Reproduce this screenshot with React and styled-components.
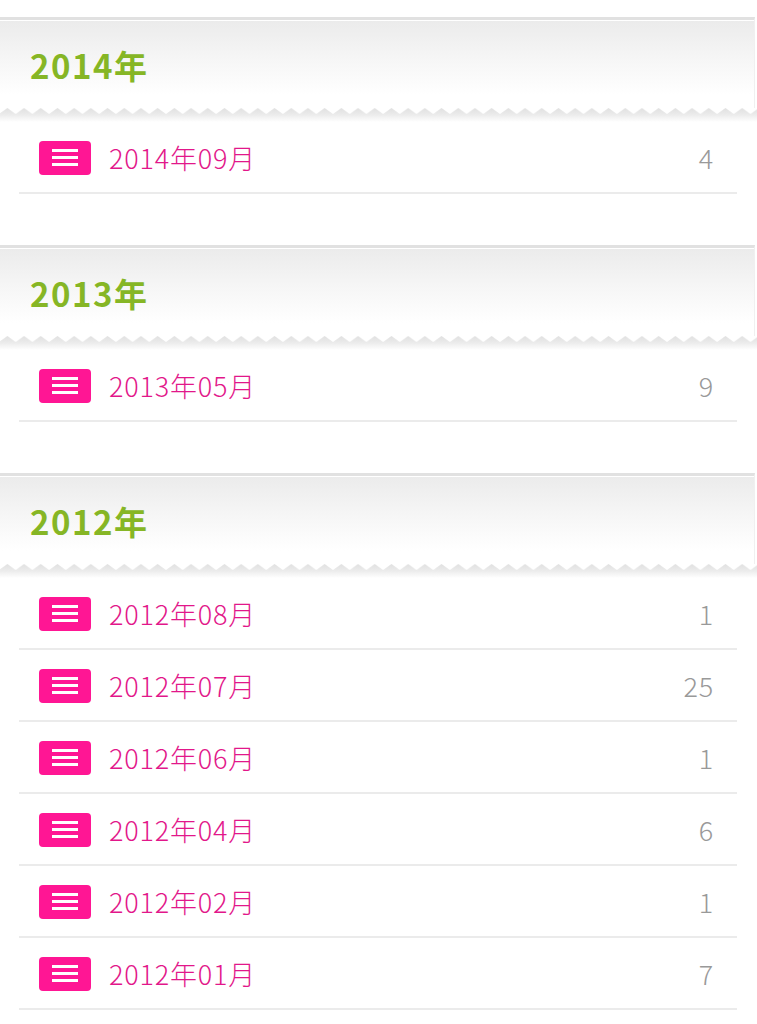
import React, { useId } from 'react'
import styled, { createGlobalStyle } from 'styled-components'

const GlobalStyle = createGlobalStyle`
  html, body {
    margin: 0;
    padding: 0;
    background: #fff;
  }
  body {
    font-family: 'Noto Sans CJK JP', 'Noto Sans', sans-serif;
  }
`

const Page = styled.div`
  padding-top: 17px;
`
const Section = styled.section`
  margin-bottom: 51px;
`
const Header = styled.div`
  width: 755px;
  height: 91px;
  box-sizing: border-box;
  border-top: 3px solid #e1e1e1;
  border-right: 1px solid #f0f0f0;
  box-shadow: inset 0 1px 0 #fff;
  background: linear-gradient(#ebebeb 0%, #f6f6f6 45%, #fff 85%);
  display: flex;
  align-items: center;
  padding: 2px 0 0 30px;
`
const Year = styled.h2`
  margin: 0;
  color: #86b625;
  font-size: 33px;
  font-weight: 700;
  letter-spacing: 1.5px;
`
const ZigzagStrip = styled.svg`
  display: block;
  width: 100%;
  height: 14px;
`
const List = styled.ul`
  list-style: none;
  margin: 0 20px 0 19px;
  padding: 0;
`
const Row = styled.li`
  height: 72px;
  box-sizing: border-box;
  border-bottom: 2px solid #ebebeb;
  display: flex;
  align-items: center;
  padding: 1px 23px 0 20px;
`
const Icon = styled.span`
  width: 52px;
  height: 34px;
  border-radius: 4px;
  background: #ff1694;
  display: flex;
  flex-direction: column;
  justify-content: center;
  align-items: center;
  gap: 4px;
  margin-right: 18px;
  flex-shrink: 0;
`
const Bar = styled.span`
  width: 26px;
  height: 3px;
  background: #fff;
`
const Month = styled.span`
  color: #e2178a;
  font-size: 27px;
  font-weight: 300;
  letter-spacing: 0.8px;
  flex: 1;
`
const Count = styled.span`
  color: #999;
  font-size: 27px;
  font-weight: 300;
  letter-spacing: 0.8px;
`

const archive = [
  { year: '2014年', months: [['2014年09月', 4]] },
  { year: '2013年', months: [['2013年05月', 9]] },
  {
    year: '2012年',
    months: [
      ['2012年08月', 1],
      ['2012年07月', 25],
      ['2012年06月', 1],
      ['2012年04月', 6],
      ['2012年02月', 1],
      ['2012年01月', 7],
    ],
  },
]

function Zigzag() {
  const id = useId().replace(/:/g, '')
  return (
    <ZigzagStrip>
      <defs>
        <linearGradient id={`g${id}`} x1='0' y1='0' x2='0' y2='14' gradientUnits='userSpaceOnUse'>
          <stop offset='0' stopColor='#e0e0e0' />
          <stop offset='0.5' stopColor='#ececec' />
          <stop offset='1' stopColor='#fff' />
        </linearGradient>
        <pattern id={`p${id}`} x='-1' y='0' width='16.7' height='14' patternUnits='userSpaceOnUse'>
          <path d='M0 6 L8.35 0 L16.7 6 L16.7 14 L0 14 Z' fill={`url(#g${id})`} />
        </pattern>
        <filter id={`f${id}`}>
          <feGaussianBlur stdDeviation='0.6' />
        </filter>
      </defs>
      <rect x='0' y='0' width='100%' height='14' fill={`url(#p${id})`} filter={`url(#f${id})`} />
    </ZigzagStrip>
  )
}

function MenuIcon() {
  return (
    <Icon>
      <Bar />
      <Bar />
      <Bar />
    </Icon>
  )
}

export default function App() {
  return (
    <Page>
      <GlobalStyle />
      {archive.map((group) => (
        <Section key={group.year}>
          <Header>
            <Year>{group.year}</Year>
          </Header>
          <Zigzag />
          <List>
            {group.months.map(([label, count]) => (
              <Row key={label}>
                <MenuIcon />
                <Month>{label}</Month>
                <Count>{count}</Count>
              </Row>
            ))}
          </List>
        </Section>
      ))}
    </Page>
  )
}
